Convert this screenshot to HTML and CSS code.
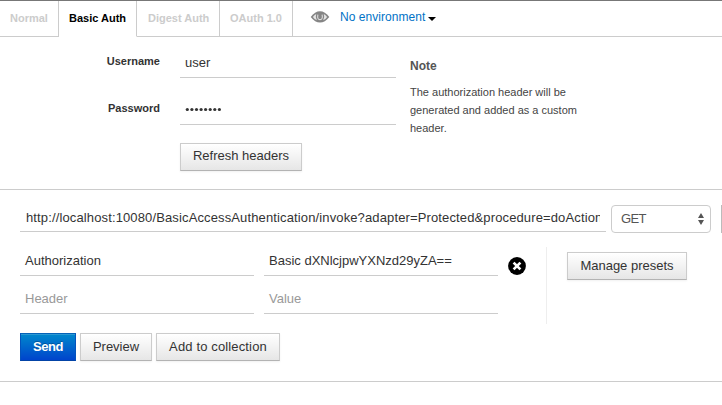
FILE: index.html
```html
<!DOCTYPE html>
<html lang="en">
<head>
<meta charset="utf-8">
<title>Request builder</title>
<link rel="stylesheet" href="styles.css">
</head>
<body>
<nav class="tabs">
  <a class="tab tab-normal"><span>Normal</span></a>
  <a class="tab tab-basic active"><span>Basic Auth</span></a>
  <a class="tab tab-digest"><span>Digest Auth</span></a>
  <a class="tab tab-oauth"><span>OAuth 1.0</span></a>
  <div class="environment">
    <svg class="eye" viewBox="0 0 20 14" width="20" height="14">
      <path d="M.7 7Q5 1.2 10 1.2T19.3 7Q15 12.5 10 12.5T.7 7Z" fill="#858585"/>
      <path d="M2.9 7Q4.3 4.9 6.2 3.9Q5 7.5 6.8 10.3Q4.4 9.2 2.9 7ZM17.1 7Q15.7 4.9 13.8 3.9Q15 7.5 13.2 10.3Q15.6 9.2 17.1 7Z" fill="#e4e4e4"/>
      <path d="M7.9 4.6Q6.9 9.6 10 9.6T12.1 4.6" fill="none" stroke="#ddd" stroke-width="1.1"/>
    </svg>
    <span class="env-name">No environment</span>
    <i class="caret"></i>
  </div>
</nav>
<section class="auth">
  <form class="auth-form">
    <div class="auth-row"><label>Username</label><div class="field user">user</div></div>
    <div class="auth-row second"><label>Password</label><div class="field password"><svg width="38" height="5" viewBox="0 0 38 5" fill="#333"><circle cx="2.3" cy="2.5" r="1.6"/><circle cx="6.9" cy="2.5" r="1.6"/><circle cx="11.5" cy="2.5" r="1.6"/><circle cx="16.1" cy="2.5" r="1.6"/><circle cx="20.6" cy="2.5" r="1.6"/><circle cx="25.2" cy="2.5" r="1.6"/><circle cx="29.8" cy="2.5" r="1.6"/><circle cx="34.4" cy="2.5" r="1.6"/></svg></div></div>
    <div class="btn refresh"><span>Refresh headers</span></div>
  </form>
  <aside class="note">
    <h4>Note</h4>
    <p>The authorization header will be<br>generated and added as a custom<br>header.</p>
  </aside>
</section>
<section class="request">
  <div class="url-row">
    <div class="url"><div class="url-text">http://localhost:10080/BasicAccessAuthentication/invoke?adapter=Protected&amp;procedure=doAction</div></div>
    <div class="select"><span>GET</span><svg width="6" height="12" viewBox="0 0 6 12" fill="#555"><path d="M0 5L3 0L6 5ZM0 7H6L3 12Z"/></svg></div>
    <div class="params-btn"></div>
  </div>
  <div class="headers-row">
    <div class="headers">
      <div class="pair"><div class="field key">Authorization</div><div class="field value">Basic dXNlcjpwYXNzd29yZA==</div>
        <svg class="remove" width="18" height="18" viewBox="0 0 18 18"><circle cx="9" cy="9" r="8.9"/><path d="M5.6 5.6L12.4 12.4M12.4 5.6L5.6 12.4" stroke="#fff" stroke-width="2.7"/></svg>
      </div>
      <div class="pair blank"><div class="field key">Header</div><div class="field value">Value</div></div>
    </div>
    <div class="presets"><div class="btn manage"><span>Manage presets</span></div></div>
  </div>
  <div class="actions">
    <div class="btn primary send"><span>Send</span></div>
    <div class="btn preview"><span>Preview</span></div>
    <div class="btn collection"><span>Add to collection</span></div>
  </div>
</section>
</body>
</html>
```

FILE: styles.css
```css
* { box-sizing: border-box; }
body {
  margin: 0;
  width: 722px;
  height: 405px;
  overflow: hidden;
  background: #fff;
  color: #333;
  font: 13px/18px "Liberation Sans", Arial, sans-serif;
}
.tabs {
  display: flex;
  height: 37px;
  border-top: 1px solid #777;
}
.tab {
  border-right: 1px solid #ccc;
  border-bottom: 1px solid #ccc;
  padding: 8px 0 0 10px;
  font-size: 11px;
  font-weight: bold;
  color: #ccc;
  white-space: nowrap;
}
.tab-normal { width: 59px; }
.tab-basic { width: 78px; }
.tab-digest { width: 83px; padding-left: 11px; }
.tab-oauth { width: 73px; }
.tab.active { color: #000; border-bottom-color: #fff; }
.environment {
  flex: 1;
  display: flex;
  align-items: flex-start;
  border-bottom: 1px solid #ccc;
  padding-left: 17px;
}
.eye { margin-top: 9px; }
.env-name { color: #0072c6; margin: 7px 0 0 10px; font-size: 12px; letter-spacing: .05px; }
.caret {
  margin: 16px 0 0 3px;
  border: 4px solid transparent;
  border-top-color: #000;
  border-bottom: 0;
}
.auth {
  display: flex;
  height: 153px;
  border-bottom: 1px solid #ccc;
}
.auth-form { width: 396px; padding-top: 11px; }
.auth-row { display: flex; height: 30px; }
.auth-row.second { margin-top: 17px; }
.auth-row label {
  width: 160px;
  margin-right: 20px;
  padding-top: 4px;
  text-align: right;
  font-size: 11px;
  font-weight: bold;
}
.field { border-bottom: 1px solid #ccc; padding: 5px 5px 0; white-space: nowrap; }
.auth-row .field { width: 216px; }
.field.user { padding-top: 6px; }
.field.password { padding-top: 12px; line-height: 0; }
.btn {
  height: 28px;
  border: 1px solid #ccc;
  border-bottom-color: #b3b3b3;
  background: linear-gradient(#fff, #e6e6e6);
  box-shadow: inset 0 1px 0 #fff, 0 1px 2px rgba(0,0,0,.06);
  text-align: center;
  line-height: 26px;
  white-space: nowrap;
}
.refresh { width: 122px; margin: 18px 0 0 180px; line-height: 24px; }
.note { padding: 19px 0 0 14px; color: #555; }
.note h4 { margin: 0; font-size: 12px; line-height: 20px; }
.note p { margin: 7px 0 0; font-size: 11px; line-height: 18px; color: #444; }
.request {
  height: 192px;
  border-bottom: 1px solid #ccc;
  padding: 15px 0 0 20px;
}
.url-row { display: flex; height: 28px; }
.url {
  width: 586px;
  height: 27px;
  border-bottom: 1px solid #ccc;
  padding: 4px 6px 0;
  margin-right: 5px;
}
.url-text { overflow: hidden; white-space: nowrap; letter-spacing: .13px; }
.select {
  display: flex;
  justify-content: space-between;
  align-items: center;
  width: 100px;
  padding: 0 6px 1px 9px;
  border: 1px solid #ccc;
  border-radius: 4px;
  color: #555;
  letter-spacing: -.6px;
}
.params-btn { width: 1px; margin-left: 10px; background: #bbb; }
.headers-row { display: flex; height: 77px; margin-top: 14px; }
.headers { width: 526px; }
.pair { display: flex; height: 29px; }
.pair .field { width: 234px; padding-top: 5px; }
.pair .value { margin-left: 10px; }
.pair.blank { margin-top: 9px; color: #999; }
.remove { margin: 10px 0 0 10px; }
.presets { padding: 5px 0 0 20px; border-left: 1px solid #eee; }
.manage { width: 120px; }
.actions { display: flex; gap: 4px; margin-top: 9px; }
.send { width: 56px; letter-spacing: -.4px; }
.preview { width: 72px; }
.collection { width: 124px; letter-spacing: .14px; }
.btn.primary {
  color: #fff;
  font-weight: bold;
  border-color: #0563b8 #0353bd #0343a6;
  background: linear-gradient(#0088cc, #0044cc);
  box-shadow: inset 0 1px 0 #2b98d3;
  text-shadow: 0 -1px 0 rgba(0,0,0,.25);
}
```
